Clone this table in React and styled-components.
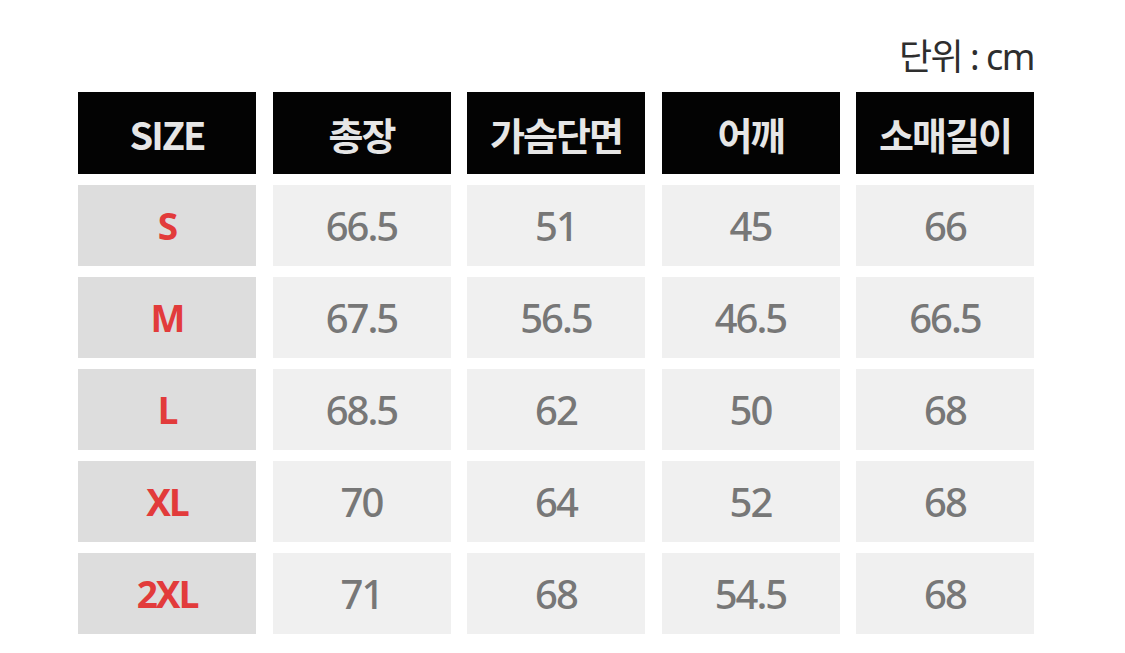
import React from 'react'
import styled, { createGlobalStyle } from 'styled-components'

const GlobalStyle = createGlobalStyle`
  body {
    margin: 0;
    background: #fff;
    font-family: "Noto Sans", "Noto Sans CJK KR", sans-serif;
  }
`

const Page = styled.div`
  width: 1125px;
  height: 653px;
  padding: 0 0 0 78px;
  box-sizing: border-box;
  overflow: hidden;
`

const Unit = styled.div`
  width: 956px;
  height: 92px;
  display: flex;
  justify-content: flex-end;
  align-items: flex-end;
  padding-bottom: 14px;
  box-sizing: border-box;
  font-size: 36px;
  line-height: 42px;
  font-weight: 400;
  color: #2e2e2e;
  letter-spacing: -1.5px;
`

const Table = styled.div`
  display: grid;
  grid-template-columns: repeat(5, 178px);
  grid-template-rows: 82px repeat(5, 81px);
  column-gap: 16.5px;
  row-gap: 11px;
`

const Head = styled.div`
  background: #030303;
  color: #e6e6e6;
  display: flex;
  align-items: center;
  justify-content: center;
  font-family: "Noto Sans CJK KR", "Noto Sans", sans-serif;
  font-weight: 700;
  font-size: 38px;
  letter-spacing: -2px;
`

const Cell = styled.div`
  background: ${p => p.size ? '#dddddd' : '#f0f0f0'};
  color: ${p => p.size ? '#e23b3b' : '#777'};
  display: flex;
  align-items: center;
  justify-content: center;
  font-family: "Noto Sans", "Noto Sans CJK KR", sans-serif;
  font-weight: ${p => p.size ? 700 : 500};
  font-size: ${p => p.size ? '37px' : '40px'};
  letter-spacing: -2px;
`

const heads = ['SIZE', '총장', '가슴단면', '어깨', '소매길이']

const rows = [
  ['S', '66.5', '51', '45', '66'],
  ['M', '67.5', '56.5', '46.5', '66.5'],
  ['L', '68.5', '62', '50', '68'],
  ['XL', '70', '64', '52', '68'],
  ['2XL', '71', '68', '54.5', '68']
]

export default function App () {
  return <>
    <GlobalStyle />
    <Page>
      <Unit>단위 : cm</Unit>
      <Table>
        {heads.map(h => <Head key={h}>{h}</Head>)}
        {rows.map(r => r.map((v, i) =>
          <Cell key={r[0] + i} size={i === 0}>{v}</Cell>
        ))}
      </Table>
    </Page>
  </>
}
